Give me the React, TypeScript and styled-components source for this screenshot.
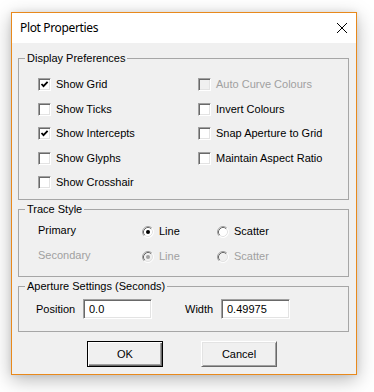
import React from 'react';
import styled, { createGlobalStyle } from 'styled-components';

const GlobalStyle = createGlobalStyle`
  body {
    margin: 0;
    background: #ffffff;
    font-family: 'Liberation Sans', Arial, sans-serif;
    font-size: 11px;
    color: #000;
  }
`;

const Page = styled.div`
  padding: 12px 0 0 11px;
  height: 392px;
  box-sizing: border-box;
`;

const Window = styled.div`
  width: 346px;
  height: 363px;
  box-sizing: border-box;
  border: 1px solid #e8891c;
  background: #f0f0f0;
  box-shadow: 0 5px 18px rgba(0, 0, 0, 0.28), 0 0 6px rgba(0, 0, 0, 0.08);
  display: flex;
  flex-direction: column;
`;

const TitleBar = styled.div`
  height: 30px;
  background: #ffffff;
  display: flex;
  align-items: center;
  justify-content: space-between;
  padding: 0 9px 0 8px;
`;

const Title = styled.div`
  font-family: 'Noto Sans', 'Open Sans', sans-serif;
  font-size: 12px;
  letter-spacing: -0.35px;
  line-height: 16px;
  color: #000;
`;

const CloseIcon = styled.svg`
  width: 10px;
  height: 10px;
  display: block;
`;

const Body = styled.div`
  display: flex;
  flex-direction: column;
  padding-top: 9px;
`;

const Group = styled.fieldset<{ $gap?: number }>`
  margin: ${(p) => p.$gap || 0}px 7px 0 6px;
  padding: 0 0 0 6px;
  border: 1px solid #a6a6a6;
  min-width: 0;
`;

const Legend = styled.legend`
  padding: 0 2px;
  line-height: 13px;
  font-size: 11px;
`;

const Columns = styled.div`
  display: grid;
  grid-template-columns: 160px 1fr;
  padding: 13px 0 10px 13px;
`;

const Column = styled.div`
  display: flex;
  flex-direction: column;
  gap: 11.5px;
`;

const Option = styled.label<{ $disabled?: boolean }>`
  display: flex;
  align-items: center;
  gap: 5px;
  height: 13px;
  line-height: 11px;
  white-space: nowrap;
  color: ${(p) => (p.$disabled ? '#a0a0a0' : '#000')};
`;

const Box = styled.span<{ $disabled?: boolean }>`
  width: 13px;
  height: 13px;
  box-sizing: border-box;
  flex: none;
  border: 1px solid;
  border-color: #a0a0a0 #ffffff #ffffff #a0a0a0;
  box-shadow: inset 1px 1px 0 #696969, inset -1px -1px 0 #e3e3e3;
  background: ${(p) => (p.$disabled ? '#f0f0f0' : '#ffffff')};
  display: flex;
  align-items: center;
  justify-content: center;
`;

const TraceGrid = styled.div`
  display: grid;
  grid-template-columns: 104px 75px 1fr;
  grid-auto-rows: 13px;
  row-gap: 12px;
  padding: 9px 0 13px 13px;
`;

const Cell = styled.span<{ $disabled?: boolean }>`
  line-height: 11px;
  white-space: nowrap;
  color: ${(p) => (p.$disabled ? '#a0a0a0' : '#000')};
`;

const FieldRow = styled.div`
  display: flex;
  align-items: center;
  padding: 6px 0 12px 11px;
`;

const FieldLabel = styled.span<{ $width: number; $offset?: number }>`
  width: ${(p) => p.$width}px;
  margin-left: ${(p) => p.$offset || 0}px;
  line-height: 13px;
`;

const TextBox = styled.input`
  width: 69px;
  height: 20px;
  box-sizing: border-box;
  margin: 0;
  padding: 0 0 0 5px;
  border: 1px solid;
  border-color: #a0a0a0 #ffffff #ffffff #a0a0a0;
  box-shadow: inset 1px 1px 0 #696969, inset -1px -1px 0 #e3e3e3;
  background: #ffffff;
  font-family: 'Liberation Sans', Arial, sans-serif;
  font-size: 11px;
  color: #000;
  outline: none;
`;

const ButtonRow = styled.div`
  display: flex;
  gap: 38px;
  padding: 9px 0 0 75px;
`;

const Button = styled.button<{ $primary?: boolean }>`
  width: 76px;
  height: 26px;
  box-sizing: border-box;
  margin: 0;
  padding: 0;
  background: #f0f0f0;
  font-family: 'Liberation Sans', Arial, sans-serif;
  font-size: 11px;
  color: #000;
  border: 1px solid;
  border-color: ${(p) =>
    p.$primary ? '#000000' : '#ffffff #696969 #696969 #ffffff'};
  box-shadow: ${(p) =>
    p.$primary
      ? 'inset 1px 1px 0 #ffffff, inset -1px -1px 0 #696969, inset -2px -2px 0 #a0a0a0'
      : 'inset 1px 1px 0 #e3e3e3, inset -1px -1px 0 #a0a0a0'};
`;

const Check = ({ checked, disabled }: { checked?: boolean; disabled?: boolean }) => (
  <Box $disabled={disabled}>
    {checked && (
      <svg width="9" height="9" viewBox="0 0 9 9">
        <path d="M1.5 4 L3.5 6.2 L7.6 1.8" stroke="#000" strokeWidth="1.8" fill="none" />
      </svg>
    )}
  </Box>
);

const Radio = ({ checked, disabled }: { checked?: boolean; disabled?: boolean }) => (
  <svg width="12" height="12" viewBox="0 0 12 12" style={{ flex: 'none' }}>
    <circle cx="6" cy="6" r="5.5" fill={disabled ? '#f0f0f0' : '#ffffff'} />
    <path d="M2.11 9.89 A5.5 5.5 0 0 1 9.89 2.11" stroke="#a0a0a0" fill="none" />
    <path d="M9.89 2.11 A5.5 5.5 0 0 1 2.11 9.89" stroke="#ffffff" fill="none" />
    <path d="M2.82 9.18 A4.5 4.5 0 0 1 9.18 2.82" stroke="#696969" fill="none" />
    <path d="M9.18 2.82 A4.5 4.5 0 0 1 2.82 9.18" stroke="#e3e3e3" fill="none" />
    {checked && <circle cx="6" cy="6" r="2" fill={disabled ? '#a0a0a0' : '#000'} />}
  </svg>
);

type Opt = { label: string; checked?: boolean; disabled?: boolean };

const leftOptions: Opt[] = [
  { label: 'Show Grid', checked: true },
  { label: 'Show Ticks' },
  { label: 'Show Intercepts', checked: true },
  { label: 'Show Glyphs' },
  { label: 'Show Crosshair' },
];

const rightOptions: Opt[] = [
  { label: 'Auto Curve Colours', disabled: true },
  { label: 'Invert Colours' },
  { label: 'Snap Aperture to Grid' },
  { label: 'Maintain Aspect Ratio' },
];

const traces = [
  { name: 'Primary', disabled: false },
  { name: 'Secondary', disabled: true },
];

const App = () => {
  const renderOpt = (o: Opt) => (
    <Option key={o.label} $disabled={o.disabled}>
      <Check checked={o.checked} disabled={o.disabled} />
      {o.label}
    </Option>
  );

  return (
    <Page>
      <GlobalStyle />
      <Window>
        <TitleBar>
          <Title>Plot Properties</Title>
          <CloseIcon viewBox="0 0 10 10">
            <path d="M0 0 L10 10 M10 0 L0 10" stroke="#000" strokeWidth="1" />
          </CloseIcon>
        </TitleBar>
        <Body>
          <Group>
            <Legend>Display Preferences</Legend>
            <Columns>
              <Column>{leftOptions.map(renderOpt)}</Column>
              <Column>{rightOptions.map(renderOpt)}</Column>
            </Columns>
          </Group>
          <Group $gap={3}>
            <Legend>Trace Style</Legend>
            <TraceGrid>
              {traces.map((t) => (
                <React.Fragment key={t.name}>
                  <Cell $disabled={t.disabled}>{t.name}</Cell>
                  <Option $disabled={t.disabled}>
                    <Radio checked disabled={t.disabled} />
                    Line
                  </Option>
                  <Option $disabled={t.disabled}>
                    <Radio disabled={t.disabled} />
                    Scatter
                  </Option>
                </React.Fragment>
              ))}
            </TraceGrid>
          </Group>
          <Group $gap={3}>
            <Legend>Aperture Settings (Seconds)</Legend>
            <FieldRow>
              <FieldLabel $width={47}>Position</FieldLabel>
              <TextBox defaultValue="0.0" />
              <FieldLabel $width={36} $offset={33}>Width</FieldLabel>
              <TextBox defaultValue="0.49975" />
            </FieldRow>
          </Group>
          <ButtonRow>
            <Button $primary>OK</Button>
            <Button>Cancel</Button>
          </ButtonRow>
        </Body>
      </Window>
    </Page>
  );
};

export default App;
